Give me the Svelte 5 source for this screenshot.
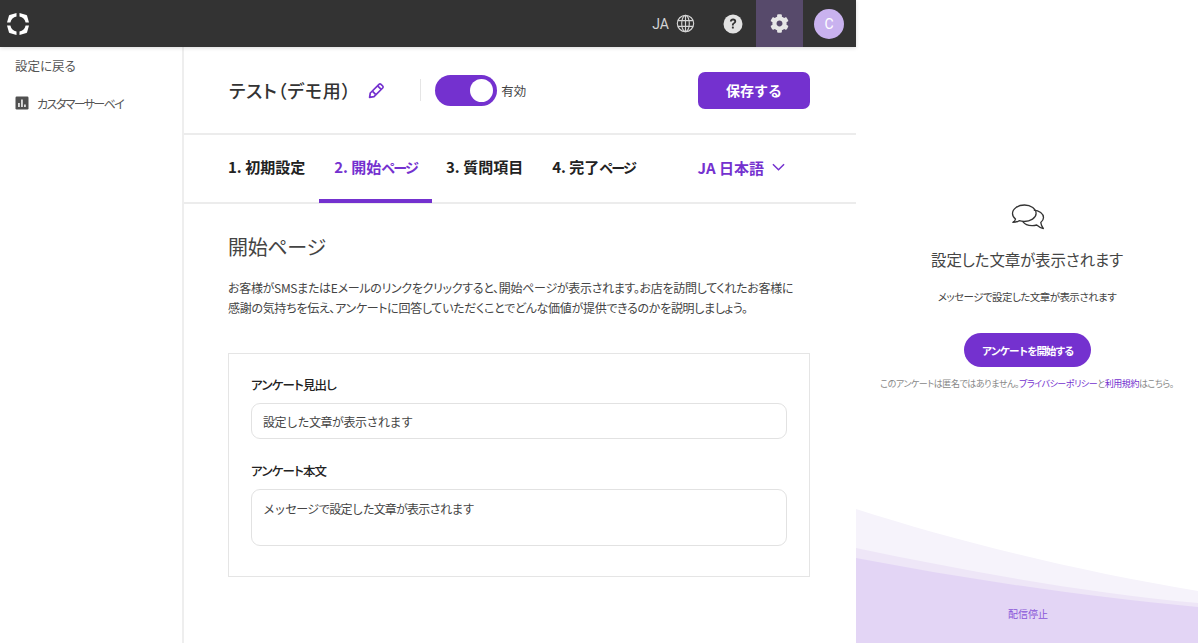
<script>
  let heading = $state('設定した文章が表示されます');
  let body = $state('メッセージで設定した文章が表示されます');
  let enabled = $state(true);

  const tabs = [
    { label: '1. 初期設定', kana: '' },
    { label: '2. 開始', kana: 'ページ' },
    { label: '3. 質問項目', kana: '' },
    { label: '4. 完了', kana: 'ページ' }
  ];
  let current = $state(1);
</script>

<div class="app">
  <div class="left">
    <header class="topbar">
      <svg class="logo" viewBox="0 0 24 24" width="24" height="24" fill="#fff">
        <path d="M1 10.5 L3 3.6 Q3.2 3.2 3.6 3 L10.5 1 L10.5 4.4 A8 8 0 0 0 4.4 10.5 Z" />
        <path transform="rotate(90 12 12)" d="M1 10.5 L3 3.6 Q3.2 3.2 3.6 3 L10.5 1 L10.5 4.4 A8 8 0 0 0 4.4 10.5 Z" />
        <path transform="rotate(180 12 12)" d="M1 10.5 L3 3.6 Q3.2 3.2 3.6 3 L10.5 1 L10.5 4.4 A8 8 0 0 0 4.4 10.5 Z" />
        <path transform="rotate(270 12 12)" d="M1 10.5 L3 3.6 Q3.2 3.2 3.6 3 L10.5 1 L10.5 4.4 A8 8 0 0 0 4.4 10.5 Z" />
      </svg>
      <div class="spacer"></div>
      <div class="lang">
        <span>JA</span>
        <svg viewBox="0 0 20 20" width="19" height="19" fill="none" stroke="#d4d4d4" stroke-width="1.2">
          <circle cx="10" cy="10" r="8.6" />
          <ellipse cx="10" cy="10" rx="4" ry="8.6" />
          <path d="M2 7h16M2 13h16M10 1.4v17.2" />
        </svg>
      </div>
      <button class="iconbtn" aria-label="ヘルプ">
        <svg viewBox="0 0 20 20" width="20" height="20">
          <circle cx="10" cy="10" r="9.5" fill="#e2e2e2" />
          <path d="M6.9 7.6c0-1.9 1.4-3 3.2-3 1.8 0 3.1 1.1 3.1 2.7 0 1.3-.7 1.9-1.6 2.5-.7.5-.9.8-.9 1.6H8.9c0-1.4.4-2 1.3-2.6.7-.5 1.1-.8 1.1-1.4 0-.6-.5-1-1.2-1-.8 0-1.2.5-1.3 1.2z" fill="#333" />
          <rect x="8.9" y="12.6" width="1.9" height="2" rx=".4" fill="#333" />
        </svg>
      </button>
      <button class="iconbtn active" aria-label="設定">
        <svg viewBox="0 0 512 512" width="19" height="19">
          <path fill="#e6e6e6" d="M487.4 315.7l-42.6-24.6c4.3-23.2 4.3-47 0-70.2l42.6-24.6c4.9-2.8 7.1-8.6 5.5-14-11.1-35.6-30-67.8-54.7-94.6-3.8-4.1-10-5.1-14.8-2.3L380.8 110c-17.9-15.4-38.5-27.3-60.8-35.1V25.8c0-5.6-3.9-10.5-9.4-11.7-36.7-8.2-74.3-7.8-109.2 0-5.5 1.2-9.4 6.1-9.4 11.7V75c-22.2 7.9-42.8 19.8-60.8 35.1L88.7 85.5c-4.9-2.8-11-1.9-14.8 2.3-24.7 26.7-43.6 58.9-54.7 94.6-1.7 5.4.6 11.2 5.5 14L67.3 221c-4.3 23.2-4.3 47 0 70.2l-42.6 24.6c-4.9 2.8-7.1 8.6-5.5 14 11.1 35.6 30 67.8 54.7 94.6 3.8 4.1 10 5.1 14.8 2.3l42.6-24.6c17.9 15.4 38.5 27.3 60.8 35.1v49.2c0 5.6 3.9 10.5 9.4 11.7 36.7 8.2 74.3 7.8 109.2 0 5.5-1.2 9.4-6.1 9.4-11.7v-49.2c22.2-7.9 42.8-19.8 60.8-35.1l42.6 24.6c4.9 2.8 11 1.9 14.8-2.3 24.7-26.7 43.6-58.9 54.7-94.6 1.5-5.5-.7-11.3-5.6-14.1zM256 336c-44.1 0-80-35.9-80-80s35.9-80 80-80 80 35.9 80 80-35.9 80-80 80z" />
        </svg>
      </button>
      <div class="avatar">C</div>
    </header>

    <div class="below">
      <nav class="side">
        <a class="back" href="#top">設定に戻る</a>
        <a class="item" href="#top">
          <svg viewBox="0 0 14 14" width="14" height="14">
            <rect x=".5" y=".5" width="13" height="13" rx="1.2" fill="#505050" />
            <path fill="#fff" d="M3.2 7h1.5v4H3.2zM6.2 3.6h1.5V11H6.2zM9.2 8.6h1.5V11H9.2z" />
          </svg>
          カスタマーサーベイ
        </a>
      </nav>

      <main class="main">
        <section class="titlebar">
          <h1>テスト（デモ用）</h1>
          <svg class="pencil" viewBox="0 0 17 17" width="17" height="17" fill="none" stroke="#7431cf" stroke-width="1.7" stroke-linejoin="round">
            <path d="M1.6 15.4 L2.3 11 L11 2.3 Q12 1.4 13 2.3 L14.7 4 Q15.6 5 14.7 6 L6 14.7 Z" />
            <path d="M9.6 3.8 L13.2 7.4 M4.6 9.4 L7.6 12.4" />
          </svg>
          <div class="vline"></div>
          <button class="toggle" class:off={!enabled} aria-label="有効" onclick={() => (enabled = !enabled)}>
            <span class="knob"></span>
          </button>
          <span class="toggle-label">有効</span>
          <div class="spacer"></div>
          <button class="save">保存する</button>
        </section>

        <section class="tabs">
          {#each tabs as tab, i}
            <button class="tab" class:current={i === current} onclick={() => (current = i)}>{tab.label}<span class="kana">{tab.kana}</span></button>
          {/each}
          <div class="spacer"></div>
          <button class="langpick">
            JA 日本語
            <svg viewBox="0 0 14 8" width="13" height="8" fill="none" stroke="#7431cf" stroke-width="1.6">
              <path d="M1 1l6 6 6-6" />
            </svg>
          </button>
        </section>

        <section class="content">
          <h2>開始ページ</h2>
          <p class="lead">お客様がSMSまたはEメールのリンクをクリックすると、開始ページが表示されます。お店を訪問してくれたお客様に<br />感謝の気持ちを伝え、アンケートに回答していただくことでどんな価値が提供できるのかを説明しましょう。</p>
          <div class="card">
            <label for="heading">アンケート見出し</label>
            <input id="heading" type="text" bind:value={heading} />
            <label for="body">アンケート本文</label>
            <textarea id="body" bind:value={body}></textarea>
          </div>
        </section>
      </main>
    </div>
  </div>

  <aside class="preview">
    <svg class="bubbles" viewBox="0 0 34 26" width="34" height="26" fill="none" stroke="#333" stroke-width="1.3" stroke-linejoin="round">
      <path d="M13.5 1C7 1 1.5 4.7 1.5 9.5c0 2.3 1.2 4.2 3 5.6-.4 1.5-1.4 2.6-2.6 3.3 2.3 0 4.5-.6 6.2-1.7 1.5.5 3.1.8 5 .8 6.5 0 12-3.6 12-8S20 1 13.5 1z" />
      <path d="M22.8 6.2c5.4.4 9.7 3.5 9.7 7.4 0 2-1.1 3.7-2.7 5 .3 2.4 1.4 4.5 2.6 6-2.6-.7-4.8-1.9-6.7-3.6-1.5.4-3.1.7-4.7.6-4 0-7.5-1.6-9.2-4" />
    </svg>
    <h3>設定した文章が表示されます</h3>
    <p class="msg">メッセージで設定した文章が表示されます</p>
    <button class="start">アンケートを開始する</button>
    <p class="note">このアンケートは匿名ではありません。<a href="#top">プライバシーポリシー</a>と<a href="#top">利用規約</a>はこちら。</p>
    <svg class="waves" viewBox="0 0 342 135" width="342" height="135" preserveAspectRatio="none">
      <path fill="#f6f3fb" d="M0 1 C100 33 220 63 342 83 V135 H0 Z" />
      <path fill="#eee6f7" d="M0 40 C110 63 230 85 342 95 V135 H0 Z" />
      <path fill="#e3d5f5" d="M0 50 C110 71 230 89 342 99 V135 H0 Z" />
    </svg>
    <a class="stop" href="#top">配信停止</a>
  </aside>
</div>

<style>
  :global(body) {
    margin: 0;
    background: #fff;
  }

  .app {
    display: flex;
    width: 1198px;
    height: 643px;
    overflow: hidden;
    font-family: "Noto Sans CJK JP", "Noto Sans", sans-serif;
    font-feature-settings: "palt";
    color: #222;
  }

  .left {
    width: 856px;
    display: flex;
    flex-direction: column;
    flex-shrink: 0;
  }

  .spacer {
    flex: 1;
  }

  .topbar {
    height: 47px;
    background: #333;
    display: flex;
    align-items: center;
    padding: 0 12px 0 6px;
    box-sizing: border-box;
    box-shadow: 0 1px 4px rgba(0, 0, 0, 0.15);
    position: relative;
  }

  .lang {
    display: flex;
    align-items: center;
    gap: 7px;
    color: #d4d4d4;
    font-size: 14px;
    font-family: "Roboto", sans-serif;
    margin-right: 14px;
  }

  .iconbtn {
    width: 47px;
    height: 47px;
    border: 0;
    background: none;
    padding: 0;
    display: flex;
    align-items: center;
    justify-content: center;
  }

  .iconbtn.active {
    background: #574a6b;
  }

  .avatar {
    width: 30px;
    height: 30px;
    border-radius: 50%;
    background: #c9b2ef;
    color: #fff;
    font-size: 14px;
    font-family: "Roboto", sans-serif;
    display: flex;
    align-items: center;
    justify-content: center;
    margin-left: 11px;
  }

  .below {
    flex: 1;
    display: flex;
    min-height: 0;
  }

  .side {
    width: 184px;
    box-sizing: border-box;
    border-right: 2px solid #eee;
    padding: 9px 0 0 15px;
    font-size: 12.5px;
    flex-shrink: 0;
  }

  .side a {
    color: #555;
    text-decoration: none;
    display: flex;
    align-items: center;
  }

  .side .back {
    height: 18px;
  }

  .side .item {
    gap: 8px;
    margin-top: 20px;
    height: 18px;
    font-size: 12px;
    letter-spacing: -1.6px;
  }

  .main {
    flex: 1;
    min-width: 0;
  }

  .titlebar {
    height: 88px;
    box-sizing: border-box;
    border-bottom: 2px solid #ececec;
    display: flex;
    align-items: center;
    padding: 0 46px 0 45px;
  }

  h1 {
    font-size: 18px;
    font-weight: 500;
    margin: 0;
    color: #333;
    line-height: 1;
    white-space: nowrap;
    letter-spacing: 0.75px;
  }

  .pencil {
    margin-left: 17px;
  }

  .vline {
    width: 1px;
    height: 22px;
    background: #e5e5e5;
    margin: 0 14px 0 35px;
  }

  .toggle {
    width: 62px;
    height: 31px;
    border: 0;
    padding: 0;
    border-radius: 16px;
    background: #7431cf;
    position: relative;
    flex-shrink: 0;
  }

  .toggle.off {
    background: #bbb;
  }

  .knob {
    position: absolute;
    right: 4px;
    top: 4px;
    width: 23px;
    height: 23px;
    border-radius: 50%;
    background: #fff;
  }

  .toggle.off .knob {
    right: 35px;
  }

  .toggle-label {
    font-size: 12.5px;
    color: #444;
    margin-left: 4px;
    white-space: nowrap;
  }

  .save {
    width: 112px;
    height: 37px;
    border: 0;
    border-radius: 7px;
    background: #7431cf;
    color: #fff;
    font: 700 14px "Noto Sans CJK JP", sans-serif;
    flex-shrink: 0;
  }

  .tabs {
    height: 69px;
    box-sizing: border-box;
    border-bottom: 2px solid #ececec;
    display: flex;
    padding: 0 71px 0 29px;
  }

  .tab {
    border: 0;
    background: none;
    padding: 0 15px 2px;
    margin-right: -1px;
    font: 700 15px "Noto Sans CJK JP", sans-serif;
    color: #222;
    height: 68px;
    box-sizing: border-box;
    border-bottom: 4px solid transparent;
    white-space: nowrap;
  }

  .kana {
    font-size: 14px;
    letter-spacing: -2px;
  }

  .tab.current {
    color: #7431cf;
    border-bottom-color: #7431cf;
  }

  .langpick {
    border: 0;
    background: none;
    padding: 0 0 3px;
    color: #7431cf;
    font: 700 15px "Noto Sans CJK JP", sans-serif;
    display: flex;
    align-items: center;
    gap: 8px;
    white-space: nowrap;
  }

  .content {
    padding: 28px 46px 0 44px;
  }

  h2 {
    font-size: 20px;
    font-weight: 400;
    margin: 0;
    color: #444;
    line-height: 30px;
    letter-spacing: -0.3px;
  }

  .lead {
    font-size: 12px;
    line-height: 20px;
    margin: 16px 0 35px;
    color: #444;
    white-space: nowrap;
    letter-spacing: -0.3px;
  }

  .card {
    border: 1px solid #e5e5e5;
    box-sizing: border-box;
    height: 224px;
    padding: 21px 22px 0 22px;
  }

  .card label {
    display: block;
    font-size: 12.5px;
    font-weight: 500;
    color: #222;
    line-height: 20px;
    margin-bottom: 8px;
    letter-spacing: -0.8px;
  }

  .card input,
  .card textarea {
    display: block;
    width: 100%;
    box-sizing: border-box;
    border: 1px solid #e2e2e2;
    border-radius: 9px;
    font: 400 12px "Noto Sans CJK JP", sans-serif;
    color: #444;
    padding: 0 11px;
    outline: none;
    resize: none;
  }

  .card input {
    height: 36px;
    margin-bottom: 22px;
    letter-spacing: -0.5px;
  }

  .card textarea {
    height: 57px;
    padding-top: 9px;
    line-height: 20px;
    letter-spacing: -0.9px;
  }

  .preview {
    flex: 1;
    position: relative;
    display: flex;
    flex-direction: column;
    align-items: center;
    text-align: center;
    padding-top: 204px;
    box-sizing: border-box;
  }

  .bubbles {
    display: block;
    margin-left: 1px;
  }

  h3 {
    font-size: 15.5px;
    font-weight: 400;
    color: #444;
    margin: 17px 0 0;
    line-height: 24px;
    letter-spacing: -0.15px;
  }

  .msg {
    font-size: 10.5px;
    color: #444;
    margin: 17px 0 0;
    line-height: 18px;
    letter-spacing: -0.55px;
  }

  .start {
    width: 127px;
    height: 34px;
    margin: 27px 0 0 1px;
    border: 0;
    border-radius: 17px;
    background: #7431cf;
    color: #fff;
    font: 700 10.5px "Noto Sans CJK JP", sans-serif;
    letter-spacing: -1.3px;
  }

  .note {
    font-size: 9px;
    color: #888;
    margin: 9px 0 0;
    line-height: 16px;
    white-space: nowrap;
    letter-spacing: -0.45px;
  }

  .note a {
    color: #7431cf;
    text-decoration: none;
  }

  .waves {
    position: absolute;
    left: 0;
    bottom: 0;
    display: block;
  }

  .stop {
    position: absolute;
    left: 2px;
    right: 0;
    bottom: 21px;
    font-size: 10px;
    line-height: 16px;
    color: #8a55d8;
    text-decoration: none;
  }
</style>
